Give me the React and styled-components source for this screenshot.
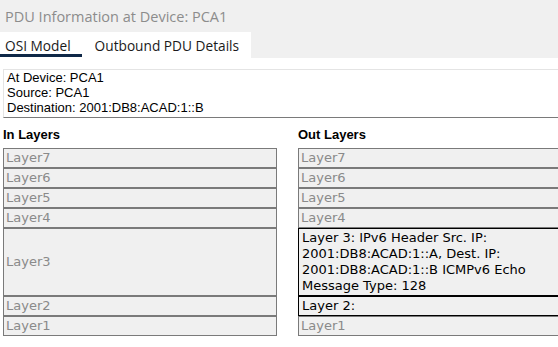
import React from 'react';
import styled, { createGlobalStyle } from 'styled-components';

const GlobalStyle = createGlobalStyle`
  html, body {
    margin: 0;
    padding: 0;
    background: #ffffff;
    overflow: hidden;
  }
`;

const Window = styled.div`
  width: 100vw;
  height: 347px;
  overflow: hidden;
  background: #ffffff;
`;

const TitleBar = styled.div`
  height: 32px;
  background: #f0f0f0;
  padding-left: 5px;
  display: flex;
  align-items: center;
  font-family: 'Open Sans', sans-serif;
  font-size: 14.5px;
  color: #8c8c8c;
`;

const TabStrip = styled.div`
  height: 26px;
  background: #f0f0f0;
  display: flex;
`;

const TabList = styled.div`
  display: flex;
  background: #ffffff;
`;

const Tab = styled.div`
  position: relative;
  display: flex;
  align-items: center;
  padding: ${({ $pad }) => $pad};
  font-family: 'Open Sans', sans-serif;
  font-size: 13.7px;
  color: #1a1a1a;

  &::after {
    content: '';
    position: absolute;
    left: 0;
    right: 0;
    bottom: 1px;
    height: 3px;
    background: ${({ $active }) => ($active ? '#0f2847' : 'transparent')};
  }
`;

const InfoBox = styled.div`
  margin: 11px 0 0 3px;
  padding: 0 3px 2px;
  border-top: 1px solid #e4e4e4;
  border-left: 1px solid #e4e4e4;
  border-bottom: 1px solid #7a7a7a;
  font-family: 'Liberation Sans', Arial, sans-serif;
  font-size: 13px;
  line-height: 15px;
  color: #000000;
`;

const Columns = styled.div`
  display: flex;
  gap: 21px;
  padding: 8px 0 0 3px;
`;

const Column = styled.div`
  flex: 0 0 274px;
  display: flex;
  flex-direction: column;
`;

const Heading = styled.div`
  height: 18px;
  margin-bottom: 4px;
  font-family: 'Liberation Sans', Arial, sans-serif;
  font-weight: bold;
  font-size: 13px;
  line-height: 18px;
  color: #000000;
`;

const LayerRow = styled.div`
  min-height: ${({ $tall }) => ($tall ? '66px' : '18px')};
  padding: ${({ $active }) => ($active ? '0 3px' : '0 2px')};
  display: flex;
  align-items: center;
  background: #f0f0f0;
  border: 1px solid ${({ $active }) => ($active ? '#000000' : '#7a7a7a')};
  font-family: 'DejaVu Sans', Verdana, sans-serif;
  font-size: 13px;
  line-height: 16px;
  color: ${({ $active }) => ($active ? '#000000' : '#8a8a8a')};
`;

const inLayers = ['Layer7', 'Layer6', 'Layer5', 'Layer4', 'Layer3', 'Layer2', 'Layer1'];

const outLayers = [
  { text: 'Layer7' },
  { text: 'Layer6' },
  { text: 'Layer5' },
  { text: 'Layer4' },
  {
    text: 'Layer 3: IPv6 Header Src. IP: 2001:DB8:ACAD:1::A, Dest. IP: 2001:DB8:ACAD:1::B ICMPv6 Echo Message Type: 128',
    active: true,
  },
  { text: 'Layer 2:', active: true },
  { text: 'Layer1' },
];

const App = () => {
  return (
    <Window>
      <GlobalStyle />
      <TitleBar>PDU Information at Device: PCA1</TitleBar>
      <TabStrip>
        <TabList>
          <Tab $active $pad="0 11px 0 5px">OSI Model</Tab>
          <Tab $pad="0 12px 0 13px">Outbound PDU Details</Tab>
        </TabList>
      </TabStrip>
      <InfoBox>
        <div>At Device: PCA1</div>
        <div>Source: PCA1</div>
        <div>Destination: 2001:DB8:ACAD:1::B</div>
      </InfoBox>
      <Columns>
        <Column>
          <Heading>In Layers</Heading>
          {inLayers.map((name) => (
            <LayerRow key={name} $tall={name === 'Layer3'}>
              {name}
            </LayerRow>
          ))}
        </Column>
        <Column>
          <Heading>Out Layers</Heading>
          {outLayers.map((layer) => (
            <LayerRow key={layer.text} $active={layer.active} $tall={layer.text.startsWith('Layer 3')}>
              {layer.text}
            </LayerRow>
          ))}
        </Column>
      </Columns>
    </Window>
  );
};

export default App;
